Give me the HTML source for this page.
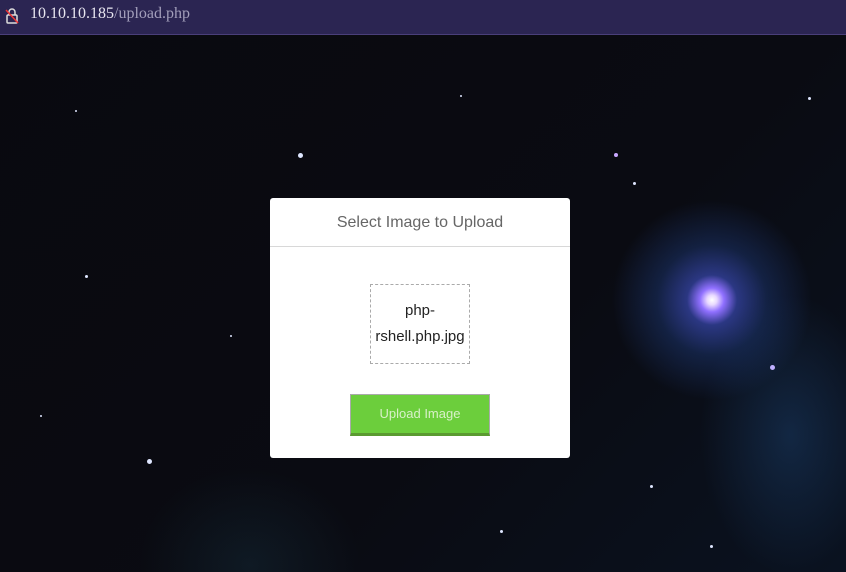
<!DOCTYPE html>
<html><head><style>
html,body{margin:0;padding:0;width:846px;height:572px;overflow:hidden;background:#0a0a12;font-family:"Liberation Sans",sans-serif}
.bar{position:absolute;left:0;top:0;width:846px;height:34px;background:#2b2552;border-bottom:1px solid #4a3f7a}
.url{position:absolute;left:30px;top:5px;font:16px "Liberation Serif",serif;color:#e8e6f0}
.url span{color:#a39fbb}
.sky{position:absolute;left:0;top:35px;width:846px;height:537px;
background:
radial-gradient(circle at 712px 265px,#fff 0,#e8d8ff 5px,#9070ff 12px,rgba(70,90,220,.55) 25px,rgba(40,80,170,.3) 55px,rgba(20,40,90,0) 100px),
radial-gradient(ellipse 90px 140px at 790px 400px,rgba(40,100,170,.28) 0,rgba(20,40,80,0) 100%),
radial-gradient(ellipse at 250px 530px,rgba(30,70,90,.25) 0,rgba(0,0,0,0) 110px),
linear-gradient(135deg,#09090f 0%,#0a0b12 60%,#0a1220 100%)}
.s{position:absolute;border-radius:50%;background:#dfe6ff}
.card{position:absolute;left:270px;top:198px;width:300px;height:260px;background:#fff;border-radius:3px}
.hd{height:48px;border-bottom:1px solid #d8d8d8;text-align:center;line-height:50px;font-size:16px;color:#666}
.box{position:absolute;left:100px;top:86px;width:100px;height:80px;border:1px dashed #aaa;text-align:center;font-size:15px;color:#222;line-height:26px;padding-top:13px;box-sizing:border-box}
.btn{position:absolute;left:80px;top:196px;width:140px;height:42px;background:#6cce3c;border:1px solid #aaa;border-bottom:3px solid #5a9a30;box-sizing:border-box;color:#d8f0c8;font-size:13px;text-align:center;line-height:38px}
</style></head><body>
<div class="bar"><svg style="position:absolute;left:5px;top:8px" width="14" height="16" viewBox="0 0 14 16"><rect x="2" y="7" width="10" height="8" rx="1" fill="none" stroke="#ddd" stroke-width="1.5"/><path d="M4 7V4a3 3 0 0 1 6 0v3" fill="none" stroke="#ddd" stroke-width="1.5"/><line x1="1" y1="2" x2="13" y2="15" stroke="#e33" stroke-width="1.5"/></svg>
<div class="url">10.10.10.185<span>/upload.php</span></div></div>
<div class="sky">
<div class="s" style="left:298px;top:118px;width:5px;height:5px"></div>
<div class="s" style="left:147px;top:424px;width:5px;height:5px"></div>
<div class="s" style="left:85px;top:240px;width:3px;height:3px"></div>
<div class="s" style="left:614px;top:118px;width:4px;height:4px;background:#c9a8ff"></div>
<div class="s" style="left:633px;top:147px;width:3px;height:3px"></div>
<div class="s" style="left:770px;top:330px;width:5px;height:5px;background:#c0b0ff"></div>
<div class="s" style="left:808px;top:62px;width:3px;height:3px"></div>
<div class="s" style="left:500px;top:495px;width:3px;height:3px"></div>
<div class="s" style="left:40px;top:380px;width:2px;height:2px"></div>
<div class="s" style="left:230px;top:300px;width:2px;height:2px"></div>
<div class="s" style="left:650px;top:450px;width:3px;height:3px"></div>
<div class="s" style="left:710px;top:510px;width:3px;height:3px"></div>
<div class="s" style="left:75px;top:75px;width:2px;height:2px"></div>
<div class="s" style="left:460px;top:60px;width:2px;height:2px"></div>
<div class="s" style="left:560px;top:250px;width:2px;height:2px"></div>
</div>
<div class="card"><div class="hd">Select Image to Upload</div>
<div class="box">php-<br>rshell.php.jpg</div>
<div class="btn">Upload Image</div></div>
</body></html>
